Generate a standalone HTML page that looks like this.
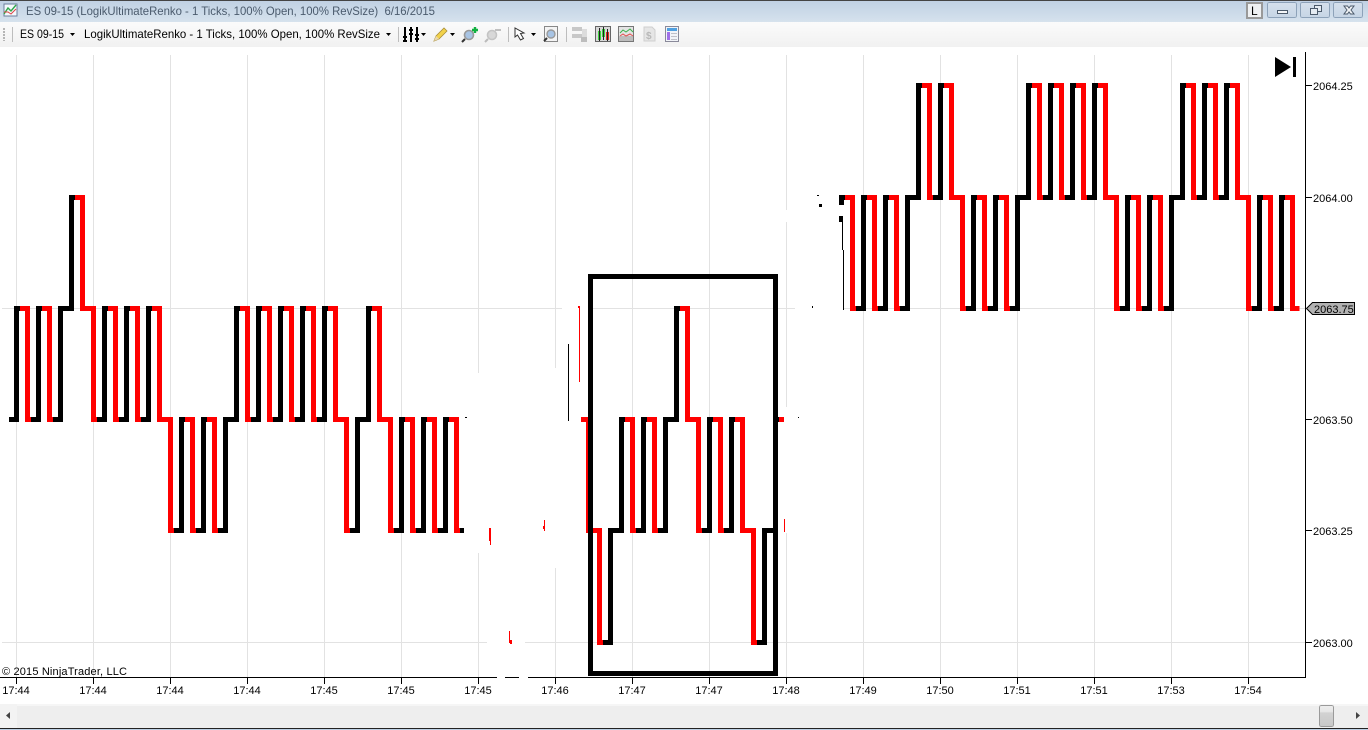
<!DOCTYPE html>
<html><head><meta charset="utf-8"><title>ES 09-15</title>
<style>
html,body{margin:0;padding:0;background:#fff;width:1368px;height:730px;overflow:hidden}
svg{display:block;position:absolute;left:0;top:0}
text{font-family:"Liberation Sans",sans-serif;white-space:pre}
</style></head><body>
<svg width="1368" height="730" viewBox="0 0 1368 730" xmlns="http://www.w3.org/2000/svg">
<defs>
<linearGradient id="tb" x1="0" y1="0" x2="0" y2="1"><stop offset="0" stop-color="#bfd0e3"/><stop offset="1" stop-color="#d6e2ed"/></linearGradient>
<linearGradient id="tl" x1="0" y1="0" x2="0" y2="1"><stop offset="0" stop-color="#fbfbfb"/><stop offset="1" stop-color="#f1f1f1"/></linearGradient>
<linearGradient id="th" x1="0" y1="0" x2="0" y2="1"><stop offset="0" stop-color="#eee"/><stop offset=".3" stop-color="#e6e6e6"/><stop offset=".35" stop-color="#d2d2d2"/><stop offset="1" stop-color="#c8c8c8"/></linearGradient>
<linearGradient id="wb" x1="0" y1="0" x2="0" y2="1"><stop offset="0" stop-color="#d5e0ec"/><stop offset="1" stop-color="#c6d5e5"/></linearGradient>
</defs>
<rect width="1368" height="730" fill="#fff"/>
<!-- title bar -->
<rect y="0" width="1368" height="22" fill="url(#tb)"/>
<rect y="0" width="1368" height="1" fill="#444"/>
<rect x="4" y="4" width="13" height="12" fill="#f4f8fc" stroke="#6b7f9c"/>
<path d="M4 14L8 8 11 11 16 5" fill="none" stroke="#2fa84a" stroke-width="1.4"/>
<path d="M4 12L8 12 11 14 16 9" fill="none" stroke="#d44" stroke-width="1"/>
<text x="26" y="15" font-size="12" fill="#4b5b6d" textLength="409" lengthAdjust="spacingAndGlyphs">ES 09-15 (LogikUltimateRenko - 1 Ticks, 100% Open, 100% RevSize)  6/16/2015</text>
<!-- window buttons -->
<g shape-rendering="crispEdges">
<rect x="1247" y="3" width="15" height="15" fill="#eef0f2" stroke="#999" stroke-width="2"/>
<rect x="1267.500" y="2.500" width="29" height="15" rx="2" fill="url(#wb)" stroke="#8da2b9"/>
<rect x="1300.500" y="2.500" width="29" height="15" rx="2" fill="url(#wb)" stroke="#8da2b9"/>
<rect x="1333.500" y="2.500" width="29" height="15" rx="2" fill="url(#wb)" stroke="#8da2b9"/>
<rect x="1277.500" y="10.500" width="10" height="3" fill="#f4f6f8" stroke="#4b5a6b"/>
<rect x="1314.500" y="5.500" width="7" height="6" fill="#e4ebf2" stroke="#4b5a6b"/>
<rect x="1310.500" y="8.500" width="7" height="6" fill="#e4ebf2" stroke="#4b5a6b"/>
</g>
<path d="M1344 6l3.500 0 1.500 2 1.500-2 3.500 0-3 4 3 4-3.500 0-1.500-2-1.500 2-3.500 0 3-4z" fill="#f2f4f6" stroke="#4b5a6b"/>
<text x="1251" y="15" font-size="12" fill="#000">L</text>
<!-- toolbar -->
<rect y="22" width="1368" height="25" fill="url(#tl)"/>
<path d="M4 28v13" stroke="#b5b5b5" stroke-width="2" stroke-dasharray="2 1" fill="none"/>
<g shape-rendering="crispEdges" fill="#bdbdbd">
<rect x="12" y="27" width="1" height="15"/><rect x="398" y="27" width="1" height="15"/><rect x="508" y="27" width="1" height="15"/><rect x="566" y="27" width="1" height="15"/>
</g>
<text x="20" y="38" font-size="12" fill="#000" textLength="44" lengthAdjust="spacingAndGlyphs">ES 09-15</text>
<text x="84" y="38" font-size="12" fill="#000" textLength="296" lengthAdjust="spacingAndGlyphs">LogikUltimateRenko - 1 Ticks, 100% Open, 100% RevSize</text>
<g fill="#000">
<path d="M70 33h5l-2.500 3z"/><path d="M386 33h5l-2.500 3z"/><path d="M421 33h5l-2.500 3z"/><path d="M450 33h5l-2.500 3z"/><path d="M531 33h5l-2.500 3z"/>
</g>
<!-- sliders icon -->
<g shape-rendering="crispEdges" fill="#000">
<rect x="404" y="27" width="2" height="15"/><rect x="403" y="36" width="4" height="2"/><rect x="403" y="40" width="4" height="2"/>
<rect x="410" y="27" width="2" height="15"/><rect x="409" y="29" width="4" height="2"/><rect x="409" y="33" width="4" height="2"/>
<rect x="416" y="27" width="2" height="15"/><rect x="415" y="34" width="4" height="2"/><rect x="415" y="38" width="4" height="2"/>
</g>
<!-- pencil -->
<path d="M434 41l2-5 8-8 3 3-8 8z" fill="#f2d24a" stroke="#a98f3a" stroke-width=".8"/>
<path d="M434 41l2-5 3 3z" fill="#e9d8b0"/>
<!-- zoom in -->
<circle cx="469" cy="35" r="4.500" fill="#a8c4e4" stroke="#999" stroke-width="1.600"/>
<path d="M465 39l-3 3" stroke="#333" stroke-width="2"/>
<path d="M475 27v6M472 30h6" stroke="#10b040" stroke-width="2.400"/>
<!-- zoom out (disabled) -->
<circle cx="492" cy="35" r="4.500" fill="#d8d8d8" stroke="#c4c4c4" stroke-width="1.600"/>
<path d="M488 39l-3 3" stroke="#bbb" stroke-width="2"/>
<path d="M495 30h6" stroke="#c0c0c0" stroke-width="2"/>
<!-- cursor -->
<path d="M515 28v9l2.500-2 3 5 3-1.500-3-5 3.500-.5z" fill="#fff" stroke="#333" stroke-width="1"/>
<!-- zoom box -->
<rect x="544.500" y="26.500" width="13" height="15" fill="#f4f4f4" stroke="#888"/>
<circle cx="551" cy="34" r="4" fill="#a8c4e4" stroke="#999" stroke-width="1.400"/>
<path d="M547 38l-3 3" stroke="#333" stroke-width="2"/>
<!-- greyed panel -->
<g shape-rendering="crispEdges">
<rect x="572" y="27" width="10" height="4" fill="#c8c8c8"/><rect x="572" y="34" width="10" height="4" fill="#c8c8c8"/>
<rect x="582" y="29" width="5" height="13" fill="#dcdcdc"/><rect x="581" y="37" width="6" height="5" fill="#bdbdbd"/>
<!-- candles -->
<rect x="595.500" y="26.500" width="15" height="15" fill="#d8d8d8" stroke="#666"/>
<rect x="598" y="31" width="3" height="9" fill="#3fd43f"/><rect x="602" y="29" width="3" height="8" fill="#3fd43f"/><rect x="606" y="32" width="3" height="8" fill="#e53020"/>
<rect x="599" y="28" width="1" height="13" fill="#222"/><rect x="603" y="27" width="1" height="13" fill="#222"/><rect x="607" y="29" width="1" height="12" fill="#222"/>
<!-- chart -->
<rect x="618.500" y="26.500" width="15" height="15" fill="#e4e4e4" stroke="#777"/>
<rect x="619" y="36" width="14" height="5" fill="#bdbdbd"/>
<!-- table -->
<rect x="665.500" y="26.500" width="13" height="15" fill="#f2f4f8" stroke="#8a8a9a"/>
<rect x="667" y="28" width="10" height="3" fill="#4fa0e0"/><rect x="667" y="32" width="3" height="8" fill="#a070e8"/>
<rect x="671" y="33" width="6" height="1" fill="#c0c0c8"/><rect x="671" y="36" width="6" height="1" fill="#c0c0c8"/><rect x="671" y="39" width="6" height="1" fill="#c0c0c8"/>
</g>
<path d="M620 33l3-3 3 2 4-3 3 3" fill="none" stroke="#3bb04a"/>
<path d="M620 36l3-2 3 2 4-2 3 2" fill="none" stroke="#e05050"/>
<path d="M644 27h8l3 3v11h-11z" fill="#e6e6e6" stroke="#cfcfcf"/>
<text x="646" y="39" font-size="10" font-weight="bold" fill="#b8b8b8">$</text>

<!-- grid -->
<g stroke="#e2e2e2" stroke-width="1" fill="none" shape-rendering="crispEdges">
<path d="M16.500 55V677M93.500 55V677M170.500 55V677M247.500 55V677M324.500 55V677M401.500 55V677M478.500 55V373M478.500 553V677M555.500 55V368M555.500 568V677M632.500 55V677M709.500 55V677M786.500 55V210M786.500 222V407M786.500 533V677M863.500 55V677M940.500 55V677M1017.500 55V677M1094.500 55V677M1171.500 55V677M1248.500 55V677"/>
<path d="M2 308.500H562M593 308.500H795M843 308.500H1305M2 642.500H487M525 642.500H1305"/>
</g>
<!-- axes -->
<g stroke="#000" stroke-width="1" fill="none" shape-rendering="crispEdges">
<path d="M1305.500 52V678"/>
<path d="M0 677.500H497M505 677.500H519M528 677.500H1306"/>
<path d="M16.500 678V684M93.500 678V684M170.500 678V684M247.500 678V684M324.500 678V684M401.500 678V684M478.500 678V684M555.500 678V684M632.500 678V684M709.500 678V684M786.500 678V684M863.500 678V684M940.500 678V684M1017.500 678V684M1094.500 678V684M1171.500 678V684M1248.500 678V684"/>
<path d="M1306 85.500H1312M1306 197.500H1312M1306 419.500H1312M1306 530.500H1312M1306 642.500H1312"/>
</g>
<!-- black (up) bars -->
<path fill="none" stroke="#000" stroke-width="5" stroke-linejoin="miter" d="
M9 419.500h7.500V308.500h3.500M31 419.500h7.500V308.500h3.500M53 419.500h7.500V308.500h3.500M64 308.500h7.500V197.500h3.500
M97 419.500h7.500V308.500h3.500M119 419.500h7.500V308.500h3.500M141 419.500h7.500V308.500h3.500
M174 530.500h7.500V419.500h3.500M196 530.500h7.500V419.500h3.500M218 530.500h7.500V419.500h3.500M229 419.500h7.500V308.500h3.500
M251 419.500h7.500V308.500h3.500M273 419.500h7.500V308.500h3.500M295 419.500h7.500V308.500h3.500M317 419.500h7.500V308.500h3.500
M350 530.500h7.500V419.500h3.500M361 419.500h7.500V308.500h3.500
M394 530.500h7.500V419.500h3.500M416 530.500h7.500V419.500h3.500M438 530.500h7.500V419.500h3.500
M459 530.500H464
M603 642.500h7.500V530.500h3.500M614 530.500h7.500V419.500h3.500M636 530.500h7.500V419.500h3.500M658 530.500h7.500V419.500h3.500M669 419.500h7.500V308.500h3.500
M702 530.500h7.500V419.500h3.500M724 530.500h7.500V419.500h3.500
M757 642.500h7.500V530.500h3.500M768 530.500h7.500V419.500h3.500
M856 308.500h7.500V197.500h3.500M878 308.500h7.500V197.500h3.500M900 308.500h7.500V197.500h3.500M911 197.500h7.500V85.500h3.500
M933 197.500h7.500V85.500h3.500M966 308.500h7.500V197.500h3.500M988 308.500h7.500V197.500h3.500M1010 308.500h7.500V197.500h3.500M1021 197.500h7.500V85.500h3.500
M1043 197.500h7.500V85.500h3.500M1065 197.500h7.500V85.500h3.500M1087 197.500h7.500V85.500h3.500
M1120 308.500h7.500V197.500h3.500M1142 308.500h7.500V197.500h3.500M1164 308.500h7.500V197.500h3.500M1175 197.500h7.500V85.500h3.500
M1197 197.500h7.500V85.500h3.500M1219 197.500h7.500V85.500h3.500
M1252 308.500h7.500V197.500h3.500M1274 308.500h7.500V197.500h3.500"/>
<!-- red (down) bars -->
<path fill="none" stroke="#f00" stroke-width="5" stroke-linejoin="miter" d="
M20 308.500h7.500V419.500h3.500M42 308.500h7.500V419.500h3.500M75 197.500h7.500V308.500h3.500M86 308.500h7.500V419.500h3.500
M108 308.500h7.500V419.500h3.500M130 308.500h7.500V419.500h3.500M152 308.500h7.500V419.500h3.500M163 419.500h7.500V530.500h3.500
M185 419.500h7.500V530.500h3.500M207 419.500h7.500V530.500h3.500
M240 308.500h7.500V419.500h3.500M262 308.500h7.500V419.500h3.500M284 308.500h7.500V419.500h3.500M306 308.500h7.500V419.500h3.500M328 308.500h7.500V419.500h3.500
M339 419.500h7.500V530.500h3.500M372 308.500h7.500V419.500h3.500M383 419.500h7.500V530.500h3.500
M405 419.500h7.500V530.500h3.500M427 419.500h7.500V530.500h3.500M449 419.500h7.500V530.500h3.500
M581 419.500h7.500V530.500h3.500M592 530.500h7.500V642.500h3.500
M625 419.500h7.500V530.500h3.500M647 419.500h7.500V530.500h3.500M680 308.500h7.500V419.500h3.500M691 419.500h7.500V530.500h3.500
M713 419.500h7.500V530.500h3.500M735 419.500h7.500V530.500h3.500M746 530.500h7.500V642.500h3.500
M779 419.500H784
M845 197.500h7.500V308.500h3.500M867 197.500h7.500V308.500h3.500M889 197.500h7.500V308.500h3.500
M922 85.500h7.500V197.500h3.500M944 85.500h7.500V197.500h3.500M955 197.500h7.500V308.500h3.500M977 197.500h7.500V308.500h3.500M999 197.500h7.500V308.500h3.500
M1032 85.500h7.500V197.500h3.500M1054 85.500h7.500V197.500h3.500M1076 85.500h7.500V197.500h3.500M1098 85.500h7.500V197.500h3.500M1109 197.500h7.500V308.500h3.500
M1131 197.500h7.500V308.500h3.500M1153 197.500h7.500V308.500h3.500
M1186 85.500h7.500V197.500h3.500M1208 85.500h7.500V197.500h3.500M1230 85.500h7.500V197.500h3.500M1241 197.500h7.500V308.500h3.500
M1263 197.500h7.500V308.500h3.500M1285 197.500h7.500V308.500h7"/>
<!-- fragments -->
<g shape-rendering="crispEdges">
<g fill="#f00">
<rect x="578" y="306" width="2" height="2"/><rect x="579" y="306" width="1" height="76"/>
<rect x="489" y="528" width="2" height="13"/><rect x="490" y="541" width="1" height="4"/>
<rect x="543" y="526" width="2" height="3"/><rect x="544" y="520" width="1" height="11"/>
<rect x="509" y="631" width="1" height="12"/><rect x="510" y="640" width="2" height="4"/>
<rect x="784" y="519" width="1" height="13"/>
</g>
<g fill="#000">
<rect x="568" y="344" width="1" height="77"/>
<rect x="465" y="417" width="2" height="1"/><rect x="798" y="417" width="1" height="1"/><rect x="812" y="306" width="1" height="2"/>
<rect x="839" y="195" width="6" height="5"/><rect x="839" y="200" width="5" height="5"/>
<rect x="817" y="195" width="2" height="1"/><rect x="819" y="204" width="3" height="3"/>
<rect x="839" y="216" width="4" height="6"/><rect x="842" y="222" width="1" height="28"/><rect x="843" y="250" width="1" height="60"/>
</g>
</g>
<!-- box -->
<rect x="590.500" y="276.500" width="185" height="397" fill="none" stroke="#000" stroke-width="5"/>
<!-- skip icon -->
<path d="M1275 57L1291 67 1275 77z" fill="#000"/>
<rect x="1293" y="57" width="3" height="20" fill="#000"/>
<!-- labels -->
<g font-size="11" fill="#000">
<text x="1313" y="90">2064.25</text>
<text x="1313" y="202">2064.00</text>
<text x="1313" y="424">2063.50</text>
<text x="1313" y="535">2063.25</text>
<text x="1313" y="647">2063.00</text>
<text x="2" y="675" textLength="125" lengthAdjust="spacing">© 2015 NinjaTrader, LLC</text>
</g>
<path d="M1306.500 308.500L1312.500 302.500H1354.500V314.500H1312.500z" fill="#b2b2b2" stroke="#000" stroke-width="1"/>
<text x="1314" y="313" font-size="11" fill="#000">2063.75</text>
<g font-size="11" fill="#000" text-anchor="middle">
<text x="16" y="694">17:44</text><text x="93" y="694">17:44</text><text x="170" y="694">17:44</text><text x="247" y="694">17:44</text>
<text x="324" y="694">17:45</text><text x="401" y="694">17:45</text><text x="478" y="694">17:45</text><text x="555" y="694">17:46</text>
<text x="632" y="694">17:47</text><text x="709" y="694">17:47</text><text x="786" y="694">17:48</text><text x="863" y="694">17:49</text>
<text x="940" y="694">17:50</text><text x="1017" y="694">17:51</text><text x="1094" y="694">17:51</text><text x="1171" y="694">17:53</text><text x="1248" y="694">17:54</text>
</g>
<!-- scrollbar -->
<g shape-rendering="crispEdges">
<rect y="704" width="1368" height="24" fill="#eeeeee"/>
<rect y="704" width="1368" height="2" fill="#f6f6f6"/>
<rect y="704" width="17" height="24" fill="#f3f3f3"/>
<rect y="728" width="1368" height="1" fill="#222"/>
<rect y="729" width="1368" height="1" fill="#bccfe3"/>
<rect x="1319.500" y="705.500" width="14" height="21" rx="2" fill="url(#th)" stroke="#9a9a9a"/>
</g>
<path d="M10 712v7l-4-3.500z" fill="#444"/>
<path d="M1356 712v7l4-3.500z" fill="#444"/>
</svg>
</body></html>
